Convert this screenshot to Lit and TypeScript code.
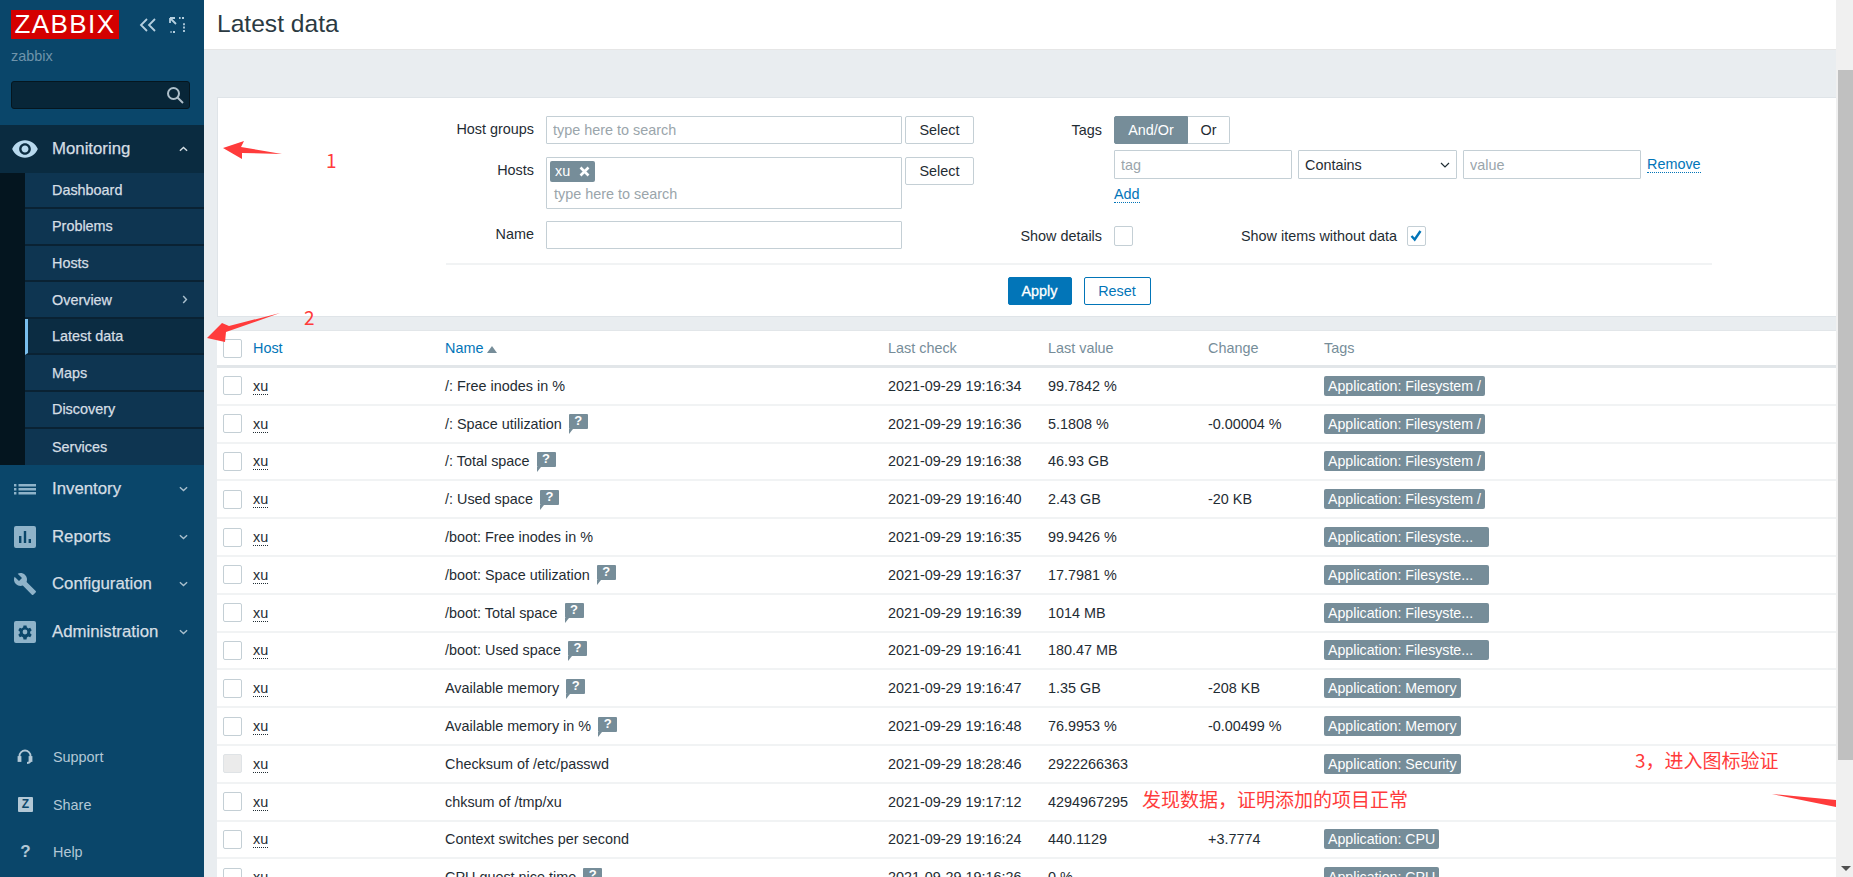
import { LitElement, html, css, svg } from 'lit'
import { customElement } from 'lit/decorators.js'

const SUB = ['Dashboard', 'Problems', 'Hosts', 'Overview', 'Latest data', 'Maps', 'Discovery', 'Services']

const FS = 'Application: Filesystem /'
const BT = 'Application: Filesyste...'
const MEM = 'Application: Memory'
const CPU = 'Application: CPU'

const ROWS = [
  { name: '/: Free inodes in %', hint: false, check: '2021-09-29 19:16:34', value: '99.7842 %', change: '', tag: FS },
  { name: '/: Space utilization', hint: true, check: '2021-09-29 19:16:36', value: '5.1808 %', change: '-0.00004 %', tag: FS },
  { name: '/: Total space', hint: true, check: '2021-09-29 19:16:38', value: '46.93 GB', change: '', tag: FS },
  { name: '/: Used space', hint: true, check: '2021-09-29 19:16:40', value: '2.43 GB', change: '-20 KB', tag: FS },
  { name: '/boot: Free inodes in %', hint: false, check: '2021-09-29 19:16:35', value: '99.9426 %', change: '', tag: BT },
  { name: '/boot: Space utilization', hint: true, check: '2021-09-29 19:16:37', value: '17.7981 %', change: '', tag: BT },
  { name: '/boot: Total space', hint: true, check: '2021-09-29 19:16:39', value: '1014 MB', change: '', tag: BT },
  { name: '/boot: Used space', hint: true, check: '2021-09-29 19:16:41', value: '180.47 MB', change: '', tag: BT },
  { name: 'Available memory', hint: true, check: '2021-09-29 19:16:47', value: '1.35 GB', change: '-208 KB', tag: MEM },
  { name: 'Available memory in %', hint: true, check: '2021-09-29 19:16:48', value: '76.9953 %', change: '-0.00499 %', tag: MEM },
  { name: 'Checksum of /etc/passwd', hint: false, check: '2021-09-29 18:28:46', value: '2922266363', change: '', tag: 'Application: Security', off: true },
  { name: 'chksum of /tmp/xu', hint: false, check: '2021-09-29 19:17:12', value: '4294967295', change: '', tag: '' },
  { name: 'Context switches per second', hint: false, check: '2021-09-29 19:16:24', value: '440.1129', change: '+3.7774', tag: CPU },
  { name: 'CPU guest nice time', hint: true, check: '2021-09-29 19:16:26', value: '0 %', change: '', tag: CPU },
]

const ICONS: Record<string, unknown> = {
  eye: svg`<path d="M12 4.5C7 4.5 2.73 7.61 1 12c1.73 4.39 6 7.5 11 7.5s9.27-3.11 11-7.5c-1.73-4.39-6-7.5-11-7.5zM12 17c-2.76 0-5-2.24-5-5s2.24-5 5-5 5 2.24 5 5-2.24 5-5 5zm0-8c-1.66 0-3 1.34-3 3s1.34 3 3 3 3-1.34 3-3-1.34-3-3-3z"/>`,
  list: svg`<path d="M1 7h2.4v2.4H1zM1 11h2.4v2.4H1zM1 15h2.4v2.4H1zM5.5 7H23v2.4H5.5zM5.5 11H23v2.4H5.5zM5.5 15H23v2.4H5.5z"/>`,
  chart: svg`<path fill-rule="evenodd" d="M3 1h18a2 2 0 0 1 2 2v18a2 2 0 0 1-2 2H3a2 2 0 0 1-2-2V3a2 2 0 0 1 2-2zm3 10v7h2.4v-7zm4.8-5v12h2.4V6zm4.8 8v4H18v-4z"/>`,
  wrench: svg`<path d="M22.7 19l-9.1-9.1c.9-2.3.4-5-1.5-6.9-2-2-5-2.4-7.4-1.3L9 6 6 9 1.6 4.7C.4 7.1.9 10.1 2.9 12.1c1.9 1.9 4.6 2.4 6.9 1.5l9.1 9.1c.4.4 1 .4 1.4 0l2.3-2.3c.5-.4.5-1.1.1-1.4z"/>`,
  gear: svg`<path fill-rule="evenodd" d="M3 1h18a2 2 0 0 1 2 2v18a2 2 0 0 1-2 2H3a2 2 0 0 1-2-2V3a2 2 0 0 1 2-2zm7.5 4.5-.4 2.1c-.5.2-.9.5-1.3.8l-2-.7-1.5 2.6 1.6 1.4a5 5 0 0 0 0 1.6l-1.6 1.4 1.5 2.6 2-.7c.4.3.8.6 1.3.8l.4 2.1h3l.4-2.1c.5-.2.9-.5 1.3-.8l2 .7 1.5-2.6-1.6-1.4a5 5 0 0 0 0-1.6l1.6-1.4-1.5-2.6-2 .7c-.4-.3-.8-.6-1.3-.8l-.4-2.1zM12 9.6a2.4 2.4 0 1 1 0 4.8 2.4 2.4 0 0 1 0-4.8z"/>`,
}

const chevron = (up: boolean) => html`<svg class="chev" viewBox="0 0 10 6"><path d=${up ? 'M1 5l4-3.6L9 5' : 'M1 1l4 3.6L9 1'} /></svg>`

@customElement('app-root')
export class AppRoot extends LitElement {
  static styles = css`
    :host {
      display: flex;
      position: relative;
      width: 1853px;
      height: 877px;
      overflow: hidden;
      background: #e9edf0;
      font: 14.4px "Liberation Sans", Arial, sans-serif;
      color: #1f2c33;
    }

    /* sidebar */
    .side {
      width: 204px;
      flex: none;
      display: flex;
      flex-direction: column;
      background: #0a466a;
      color: #d5dee4;
    }
    .brand {
      height: 125px;
      flex: none;
      box-sizing: border-box;
      padding: 10px 11px 0;
    }
    .logo-row {
      display: flex;
      align-items: center;
    }
    .logo {
      width: 108px;
      height: 29px;
      background: #d40000;
      color: #fff;
      font-size: 26px;
      line-height: 29px;
      text-align: center;
      letter-spacing: 1.4px;
    }
    .logo-row svg {
      fill: none;
      stroke: #b5cfdf;
      stroke-width: 1.8;
    }
    .collapse {
      width: 18px;
      height: 14px;
      margin-left: 20px;
    }
    .expand {
      width: 16px;
      height: 16px;
      margin-left: 12px;
    }
    .server {
      margin-top: 9px;
      font-size: 14.4px;
      color: #6f94ab;
    }
    .search {
      display: flex;
      align-items: center;
      justify-content: flex-end;
      box-sizing: border-box;
      width: 179px;
      height: 28px;
      margin-top: 17px;
      padding-right: 5px;
      background: #082638;
      border: 1px solid #05161f;
      border-radius: 3px;
    }
    .search svg {
      width: 18px;
      height: 18px;
      fill: none;
      stroke: #aebfca;
      stroke-width: 2;
    }
    .top {
      display: flex;
      align-items: center;
      height: 47.5px;
      flex: none;
      font-size: 16.8px;
      color: #d5dee4;
      -webkit-text-stroke: 0.25px;
    }
    .top.open {
      background: #0a2b40;
    }
    .top .ico {
      width: 24px;
      height: 24px;
      margin-left: 13px;
      flex: none;
      fill: #8fb3c9;
    }
    .top.open .ico {
      width: 28px;
      height: 28px;
      margin-left: 11px;
      margin-right: -2px;
      fill: #b8d9ee;
    }
    .top span {
      margin-left: 15px;
      flex: 1;
    }
    .chev {
      width: 9px;
      height: 6px;
      margin-right: 16px;
      fill: none;
      stroke: #a9bfcd;
      stroke-width: 1.6;
    }
    .top.open .chev {
      stroke: #d5dee4;
    }
    .subs {
      flex: none;
      padding-left: 25px;
      background: #04151f;
    }
    .sub {
      display: flex;
      align-items: center;
      box-sizing: border-box;
      height: 36.6px;
      padding-left: 27px;
      background: #0e3551;
      border-bottom: 2px solid #0a2233;
      color: #d5dee4;
      -webkit-text-stroke: 0.25px;
    }
    .sub:last-child {
      border-bottom: 0;
    }
    .sub span {
      flex: 1;
    }
    .sub .chev {
      width: 6px;
      height: 9px;
    }
    .sub.active {
      padding-left: 24px;
      background: #0b2c42;
      border-left: 3px solid #79bfee;
    }
    .foot {
      margin-top: auto;
      padding-bottom: 1px;
    }
    .foot .row {
      display: flex;
      align-items: center;
      height: 47.5px;
      font-size: 14.4px;
      color: #b3c8d6;
    }
    .foot svg {
      width: 16px;
      height: 16px;
      margin-left: 17px;
      flex: none;
    }
    .foot .z {
      box-sizing: border-box;
      width: 15px;
      height: 15px;
      margin-left: 18px;
      flex: none;
      background: #b3c8d6;
      border-radius: 1px;
      color: #0a466a;
      font-size: 12px;
      font-weight: bold;
      line-height: 15px;
      text-align: center;
    }
    .foot .q {
      width: 15px;
      margin-left: 18px;
      flex: none;
      font-size: 17px;
      font-weight: bold;
      text-align: center;
    }
    .foot span.t {
      margin-left: 20px;
    }

    /* main column */
    .main {
      flex: 1;
      min-width: 0;
      display: flex;
      flex-direction: column;
    }
    .head {
      height: 50px;
      flex: none;
      box-sizing: border-box;
      padding-left: 13px;
      background: #fff;
      border-bottom: 1px solid #e6e6e6;
      font-size: 24.6px;
      line-height: 47px;
      color: #2b3a42;
    }
    .card {
      flex: none;
      margin: 47px 17px 0 13px;
      box-sizing: border-box;
      height: 220px;
      padding: 18px 124px 0 228px;
      background: #fff;
      border: 1px solid #dfe4e8;
      border-width: 1px 0 1px 1px;
    }
    .form {
      display: flex;
      height: 147px;
      border-bottom: 2px solid #f1f3f4;
    }
    .left {
      display: grid;
      grid-template-columns: 88px 356px 69px;
      column-gap: 12px;
      grid-template-rows: 28px 52px 28px;
      row-gap: 12.5px;
      width: 529px;
      flex: none;
    }
    .left .sel {
      width: 69px;
      margin-left: -9px;
    }
    .lab {
      text-align: right;
      line-height: 26px;
    }
    input {
      box-sizing: border-box;
      width: 100%;
      height: 28px;
      padding: 0 6px;
      background: #fff;
      border: 1px solid #c4cfd5;
      border-radius: 1px;
      font: inherit;
      color: inherit;
    }
    input::placeholder {
      color: #9aa5ab;
      opacity: 1;
    }
    .btn {
      box-sizing: border-box;
      height: 28px;
      background: #fff;
      border: 1px solid #c4cfd5;
      border-radius: 2px;
      line-height: 26px;
      text-align: center;
    }
    .multi {
      box-sizing: border-box;
      height: 52px;
      padding: 3px 3px;
      border: 1px solid #c4cfd5;
      border-radius: 1px;
    }
    .chip {
      display: flex;
      align-items: center;
      gap: 9px;
      width: 45px;
      height: 21px;
      box-sizing: border-box;
      padding-left: 5px;
      background: #768d99;
      border-radius: 2px;
      color: #fff;
    }
    .chip svg {
      width: 11px;
      height: 11px;
      stroke: #fff;
      stroke-width: 2.6;
    }
    .multi .ph {
      margin: 4px 0 0 4px;
      color: #9aa5ab;
    }
    .right {
      margin-left: 25px;
      flex: 1;
      display: flex;
      flex-direction: column;
    }
    .line {
      display: flex;
      align-items: center;
    }
    .line .rlab {
      width: 102px;
      margin-right: 12px;
      text-align: right;
    }
    .radio {
      display: flex;
      height: 28px;
      line-height: 26px;
      text-align: center;
    }
    .radio div {
      box-sizing: border-box;
      border: 1px solid #c4cfd5;
    }
    .radio .on {
      width: 74px;
      background: #768d99;
      border-color: #768d99;
      border-radius: 2px 0 0 2px;
      color: #fff;
    }
    .radio .off {
      width: 42px;
      border-left: 0;
      border-radius: 0 2px 2px 0;
    }
    .tagline {
      margin: 6px 0 0 114px;
      display: flex;
      align-items: center;
      gap: 6px;
    }
    .tagline input {
      width: 178px;
      height: 29px;
      flex: none;
    }
    .select {
      display: flex;
      align-items: center;
      justify-content: space-between;
      box-sizing: border-box;
      width: 159px;
      height: 29px;
      flex: none;
      padding: 0 6px;
      border: 1px solid #c4cfd5;
      border-radius: 1px;
    }
    .select svg {
      width: 10px;
      height: 6px;
      fill: none;
      stroke: #1f2c33;
      stroke-width: 1.2;
    }
    .link {
      color: #0275b8;
      border-bottom: 1px dotted #0275b8;
    }
    .add {
      align-self: flex-start;
      margin: 7px 0 0 114px;
    }
    .shows {
      margin-top: 23px;
    }
    .box {
      box-sizing: border-box;
      width: 19px;
      height: 20px;
      flex: none;
      background: #fff;
      border: 1.5px solid #c4cfd5;
      border-radius: 2px;
    }
    .box svg {
      display: block;
      width: 16px;
      height: 17px;
      fill: none;
      stroke: #0275b8;
      stroke-width: 2.4;
    }
    .shows .second {
      margin-left: 108px;
      width: 153px;
      margin-right: 13px;
      white-space: nowrap;
    }
    .actions {
      display: flex;
      justify-content: center;
      gap: 12px;
      margin-top: 12px;
      width: 1266px;
    }
    .actions div {
      box-sizing: border-box;
      height: 28px;
      border: 1px solid #0275b8;
      border-radius: 2px;
      line-height: 26px;
      text-align: center;
    }
    .apply {
      width: 64px;
      background: #0275b8;
      color: #fff;
      -webkit-text-stroke: 0.3px;
    }
    .reset {
      width: 67px;
      background: #fff;
      color: #0275b8;
    }

    /* table */
    .table {
      flex: none;
      margin: 13px 17px 0 13px;
      background: #fff;
      border-top: 1px solid #e2e6e9;
    }
    .tr {
      display: grid;
      grid-template-columns: 36px 192px 443px 160px 160px 116px 1fr;
      align-items: center;
      box-sizing: border-box;
      height: 37.8px;
      border-bottom: 2px solid #f1f3f4;
    }
    .tr.th {
      height: 37px;
      border-bottom: 3px solid #e2e6e9;
      color: #768d99;
    }
    .cb {
      box-sizing: border-box;
      width: 19px;
      height: 19px;
      margin-left: 6px;
      border: 1.5px solid #c4cfd5;
      border-radius: 2px;
      background: #fff;
    }
    .cb.off {
      background: #ebebeb;
      border-color: #dfe3e6;
    }
    .blue {
      color: #0275b8;
    }
    .sort {
      display: inline-block;
      margin-left: 4px;
      border: 5px solid transparent;
      border-top: 0;
      border-bottom: 7px solid #768d99;
    }
    .xu {
      border-bottom: 1px dotted #1f2c33;
    }
    .namecell {
      display: flex;
      align-items: center;
      gap: 7px;
    }
    .hint {
      position: relative;
      width: 19px;
      height: 15px;
      margin-top: -4px;
      background: #768d99;
      border-radius: 1px;
      color: #fff;
      font-size: 13px;
      font-weight: bold;
      line-height: 14px;
      text-align: center;
    }
    .hint::after {
      content: '';
      position: absolute;
      left: 0;
      top: 15px;
      border-left: 4px solid #768d99;
      border-bottom: 5px solid transparent;
    }
    .tag {
      display: block;
      width: fit-content;
      box-sizing: border-box;
      height: 20px;
      padding: 0 4px;
      background: #768d99;
      border-radius: 2px;
      color: #fff;
      font-size: 14.2px;
      line-height: 20px;
      white-space: nowrap;
    }
    .tag.cut {
      width: 165px;
    }

    /* scrollbar */
    .scroll {
      position: absolute;
      right: 0;
      top: 0;
      bottom: 0;
      width: 17px;
      background: #f0f0f0;
    }
    .thumb {
      position: absolute;
      left: 2px;
      right: 0;
      top: 70px;
      height: 690px;
      background: #c0c0c0;
    }
    .tri {
      position: absolute;
      left: 5px;
      bottom: 6px;
      border: 5px solid transparent;
      border-bottom: 0;
      border-top: 5px solid #505050;
    }

    /* hand drawn notes over the shot */
    .marks {
      position: absolute;
      left: 0;
      top: 0;
      width: 1853px;
      height: 877px;
      pointer-events: none;
    }
    .note {
      position: absolute;
      color: #ff3b3b;
      font-family: "Noto Sans CJK SC", sans-serif;
      font-size: 19px;
      line-height: 22px;
      white-space: nowrap;
    }
  `

  render() {
    return html`
      <div class="side">
        <div class="brand">
          <div class="logo-row">
            <div class="logo">ZABBIX</div>
            <svg class="collapse" viewBox="0 0 18 14"><path d="M8 1L2 7l6 6M16 1l-6 6 6 6" /></svg>
            <svg class="expand" viewBox="0 0 16 16">
              <path d="M6 15H1.5M15 15v-9M15 1h-5" stroke-dasharray="2 1.4" />
              <path d="M1 1l6 6M1 1v5M1 1h5" />
            </svg>
          </div>
          <div class="server">zabbix</div>
          <div class="search">
            <svg viewBox="0 0 18 18"><circle cx="7.5" cy="7.5" r="5.5" /><path d="M11.5 11.5L17 17" /></svg>
          </div>
        </div>
        <div class="top open">
          <svg class="ico" viewBox="0 0 24 24">${ICONS.eye}</svg><span>Monitoring</span>${chevron(true)}
        </div>
        <div class="subs">
          ${SUB.map(
            (s) => html`<div class="sub ${s === 'Latest data' ? 'active' : ''}">
              <span>${s}</span>
              ${s === 'Overview' ? html`<svg class="chev" viewBox="0 0 6 10"><path d="M1 1l3.6 4L1 9" /></svg>` : ''}
            </div>`
          )}
        </div>
        ${[
          ['Inventory', 'list'],
          ['Reports', 'chart'],
          ['Configuration', 'wrench'],
          ['Administration', 'gear'],
        ].map(
          ([label, ico]) => html`<div class="top">
            <svg class="ico" viewBox="0 0 24 24">${ICONS[ico]}</svg><span>${label}</span>${chevron(false)}
          </div>`
        )}
        <div class="foot">
          <div class="row">
            <svg viewBox="0 0 16 16" fill="none" stroke="#b3c8d6" stroke-width="1.8">
              <path d="M2.5 10V7a5.5 5.5 0 0 1 11 0v3M13.5 11c0 2-1.5 3-3.5 3" />
              <rect x="1.5" y="8" width="2" height="4" fill="#b3c8d6" />
              <rect x="12.5" y="8" width="2" height="4" fill="#b3c8d6" />
            </svg>
            <span class="t">Support</span>
          </div>
          <div class="row"><div class="z">Z</div><span class="t">Share</span></div>
          <div class="row"><div class="q">?</div><span class="t">Help</span></div>
        </div>
      </div>

      <div class="main">
        <div class="head">Latest data</div>
        <div class="card">
          <div class="form">
            <div class="left">
              <div class="lab">Host groups</div>
              <input placeholder="type here to search" />
              <div class="btn sel">Select</div>
              <div class="lab">Hosts</div>
              <div class="multi">
                <div class="chip">
                  <span>xu</span>
                  <svg viewBox="0 0 11 11"><path d="M1.5 1.5l8 8M9.5 1.5l-8 8" /></svg>
                </div>
                <div class="ph">type here to search</div>
              </div>
              <div class="btn sel">Select</div>
              <div class="lab">Name</div>
              <input />
            </div>
            <div class="right">
              <div class="line">
                <div class="rlab">Tags</div>
                <div class="radio"><div class="on">And/Or</div><div class="off">Or</div></div>
              </div>
              <div class="tagline">
                <input placeholder="tag" />
                <div class="select">
                  <span>Contains</span>
                  <svg viewBox="0 0 10 6"><path d="M1 1l4 4 4-4" /></svg>
                </div>
                <input placeholder="value" />
                <span class="link">Remove</span>
              </div>
              <span class="link add">Add</span>
              <div class="line shows">
                <div class="rlab">Show details</div>
                <div class="box"></div>
                <div class="second">Show items without data</div>
                <div class="box"><svg viewBox="0 0 16 17"><path d="M3.5 9l3.2 3.5L12.5 4" /></svg></div>
              </div>
            </div>
          </div>
          <div class="actions">
            <div class="apply">Apply</div>
            <div class="reset">Reset</div>
          </div>
        </div>

        <div class="table">
          <div class="tr th">
            <div class="cb"></div>
            <div class="blue">Host</div>
            <div class="blue">Name<i class="sort"></i></div>
            <div>Last check</div>
            <div>Last value</div>
            <div>Change</div>
            <div>Tags</div>
          </div>
          ${ROWS.map(
            (r) => html`<div class="tr">
              <div class="cb ${r.off ? 'off' : ''}"></div>
              <div><span class="xu">xu</span></div>
              <div class="namecell">
                <span>${r.name}</span>
                ${r.hint ? html`<div class="hint">?</div>` : ''}
              </div>
              <div>${r.check}</div>
              <div>${r.value}</div>
              <div>${r.change}</div>
              <div>${r.tag ? html`<span class="tag ${r.tag === BT ? 'cut' : ''}">${r.tag}</span>` : ''}</div>
            </div>`
          )}
        </div>
      </div>

      <div class="scroll">
        <div class="thumb"></div>
        <div class="tri"></div>
      </div>

      <svg class="marks" viewBox="0 0 1853 877">
        <polygon fill="#ff3b3b" points="223,148 244,141 241,147 282,154 242,153 242,159" />
        <polygon fill="#ff3b3b" points="207,338 222,323 229,326 280,313 226,332 225,342" />
        <polygon fill="#ff3b3b" points="1772,794 1836,800 1836,807" />
      </svg>
      <div class="note" style="left:326px;top:149px">1</div>
      <div class="note" style="left:304px;top:306px">2</div>
      <div class="note" style="left:1635px;top:749px">3，进入图标验证</div>
      <div class="note" style="left:1142px;top:788px">发现数据，证明添加的项目正常</div>
    `
  }
}
